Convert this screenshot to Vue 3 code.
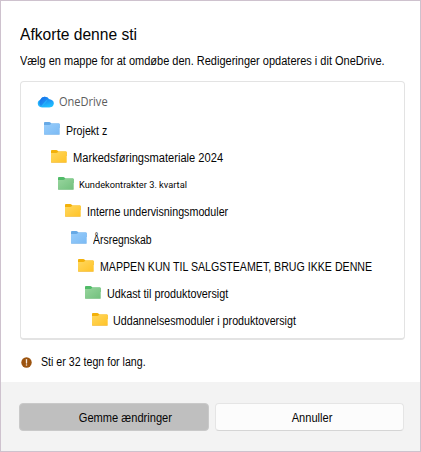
<script setup>
const rows = [
  { name: 'Projekt z', color: 'blue', cls: 'r1' },
  { name: 'Markedsføringsmateriale 2024', color: 'yellow', cls: 'r2' },
  { name: 'Kundekontrakter 3. kvartal', color: 'green', cls: 'r3' },
  { name: 'Interne undervisningsmoduler', color: 'yellow', cls: 'r4' },
  { name: 'Årsregnskab', color: 'blue', cls: 'r5' },
  { name: 'MAPPEN KUN TIL SALGSTEAMET, BRUG IKKE DENNE', color: 'yellow', cls: 'r6' },
  { name: 'Udkast til produktoversigt', color: 'green', cls: 'r7' },
  { name: 'Uddannelsesmoduler i produktoversigt', color: 'yellow', cls: 'r8' },
]
const palette = {
  blue: { tab: '#66a9e6', top: '#98cdfb', bottom: '#7bbaf4', edge: '#70aee6' },
  yellow: { tab: '#f3b10a', top: '#ffd860', bottom: '#ffc327', edge: '#efae1c' },
  green: { tab: '#50bb68', top: '#98d59e', bottom: '#72c07d', edge: '#66b873' },
}
</script>

<template>
  <main class="dialog">
    <section class="content">
      <h1><span class="fit">Afkorte denne sti</span></h1>
      <p class="intro"><span class="fit">Vælg en mappe for at omdøbe den. Redigeringer opdateres i dit OneDrive.</span></p>
      <div class="tree">
        <div class="row root">
          <svg class="cloud" width="17" height="12" viewBox="0 0 17 12">
            <defs>
              <linearGradient id="cl-a" x1="0" y1="0" x2="1" y2="1">
                <stop offset="0" stop-color="#1668e8" /><stop offset="1" stop-color="#23a8fa" />
              </linearGradient>
              <linearGradient id="cl-b" x1="0" y1="0" x2="0.4" y2="1">
                <stop offset="0" stop-color="#1b7ff0" /><stop offset="1" stop-color="#1fc0ff" />
              </linearGradient>
            </defs>
            <path d="M4 11.2A3.9 3.9 0 0 1 3.3 3.7A5 5 0 0 1 12.3 3.4A4 4 0 0 1 12.4 11.2Z" fill="#25b4fb" />
            <path d="M3.3 3.7A5 5 0 0 1 12.3 3.4C10.4 3.4 9.3 4.2 8.2 5.4L4.2 10C1.8 8.4 2 5.3 3.3 3.7Z" fill="url(#cl-a)" />
            <path d="M4.6 11.2L9.4 5.6A3.9 3.9 0 1 1 12.4 11.2Z" fill="url(#cl-b)" />
          </svg>
          <span class="label fit">OneDrive</span>
        </div>
        <div v-for="(row, i) in rows" :key="row.name" class="row" :class="row.cls">
          <svg class="folder" width="16" height="13" viewBox="0 0 16 13">
            <defs>
              <linearGradient :id="'f' + i" x1="0" y1="0" x2="1" y2="1">
                <stop offset="0" :stop-color="palette[row.color].top" />
                <stop offset="1" :stop-color="palette[row.color].bottom" />
              </linearGradient>
            </defs>
            <path d="M0 1Q0 .1 .9.1H5.4Q6 .1 6.4.5L7.6 1.4H14.8Q15.7 1.4 15.7 2.3V6H0Z" :fill="palette[row.color].tab" />
            <path d="M0 3H5.4Q6 3 6.4 2.6L7.6 1.4H14.8Q15.7 1.4 15.7 2.3V11.7Q15.7 12.6 14.8 12.6H.9Q0 12.6 0 11.7Z" :fill="`url(#f${i})`" />
            <path d="M0 11.4Q0 12.6 .9 12.6H14.8Q15.7 12.6 15.7 11.4Q15.4 11.9 14.8 11.9H.9Q.3 11.9 0 11.4Z" :fill="palette[row.color].edge" />
          </svg>
          <span class="label fit">{{ row.name }}</span>
        </div>
      </div>
      <div class="warning">
        <svg width="11" height="11" viewBox="0 0 11 11">
          <circle cx="5.5" cy="5.5" r="5.2" fill="#9c5410" />
          <path d="M5.5 2.6V6" stroke="#f5e9dd" stroke-width="1.3" stroke-linecap="round" />
          <circle cx="5.5" cy="8" r=".8" fill="#f5e9dd" />
        </svg>
        <span class="fit">Sti er 32 tegn for lang.</span>
      </div>
    </section>
    <footer>
      <button class="save"><span class="fit">Gemme ændringer</span></button>
      <button class="cancel"><span class="fit">Annuller</span></button>
    </footer>
  </main>
</template>

<style>
body { margin: 0; }
</style>

<style scoped>
.dialog {
  --fit: 0.9;
  box-sizing: border-box;
  width: 421px;
  height: 452px;
  border: 1px solid #cec2ce;
  background: #fff;
  color: #050505;
  font: 12px/16px "Liberation Sans", Arial, sans-serif;
  display: flex;
  flex-direction: column;
  white-space: nowrap;
  overflow: hidden;
}
.fit {
  display: inline-block;
  transform: scaleX(var(--fit));
  transform-origin: left center;
}
.content {
  flex: 1;
  padding: 23px 16px 0 19px;
}
h1 {
  --fit: 0.975;
  margin: 0;
  font-size: 16px;
  font-weight: 400;
  line-height: 22px;
}
.intro {
  --fit: 0.917;
  margin: 7px 0 0;
  line-height: 16px;
}
.tree {
  box-sizing: border-box;
  width: 385px;
  height: 259px;
  margin-top: 12px;
  padding: 6px 0 0 16px;
  border: 1px solid #e3e3e3;
  border-bottom-width: 2px;
  border-radius: 4px;
}
.row {
  display: flex;
  align-items: center;
  height: 27.25px;
  gap: 6px;
}
.row svg { flex: none; }
.row .label { padding-top: 3px; }
.root { --fit: 0.92; gap: 5px; }
.root .label {
  padding-top: 1px;
  color: #5c5c5c;
  font-family: "Open Sans", "Noto Sans", sans-serif;
}
.r1 { --fit: 0.885; padding-left: 7px; }
.r2 { --fit: 0.926; padding-left: 14px; }
.r3 { --fit: 1.028; padding-left: 21px; gap: 5px; font-size: 9px; font-family: Roboto, sans-serif; }
.r4 { --fit: 0.893; padding-left: 28px; }
.r5 { --fit: 0.87; padding-left: 34px; }
.r6 { --fit: 0.885; padding-left: 41px; }
.r7 { --fit: 0.9; padding-left: 48px; }
.r8 { --fit: 0.893; padding-left: 55px; gap: 5px; }
.r1 .label, .r5 .label { padding-top: 4px; }
.warning {
  --fit: 0.886;
  display: flex;
  align-items: center;
  gap: 9px;
  margin-top: 14px;
  padding-left: 1px;
  height: 16px;
}
footer {
  box-sizing: border-box;
  height: 69px;
  padding: 21px 16px 0 18px;
  background: #f3f3f3;
  display: flex;
  gap: 6px;
}
button {
  --fit: 0.925;
  box-sizing: border-box;
  width: 190px;
  height: 28px;
  padding: 1px 0 0;
  border: 1px solid #e5e5e5;
  border-bottom-color: #d5d5d5;
  border-radius: 4px;
  background: #fcfcfc;
  color: #050505;
  font: inherit;
}
button .fit { transform-origin: center; }
.save {
  padding-left: 23px;
  border-color: #c9c9c9;
  background: #bfbfbf;
}
.cancel { padding-left: 6px; }
</style>
